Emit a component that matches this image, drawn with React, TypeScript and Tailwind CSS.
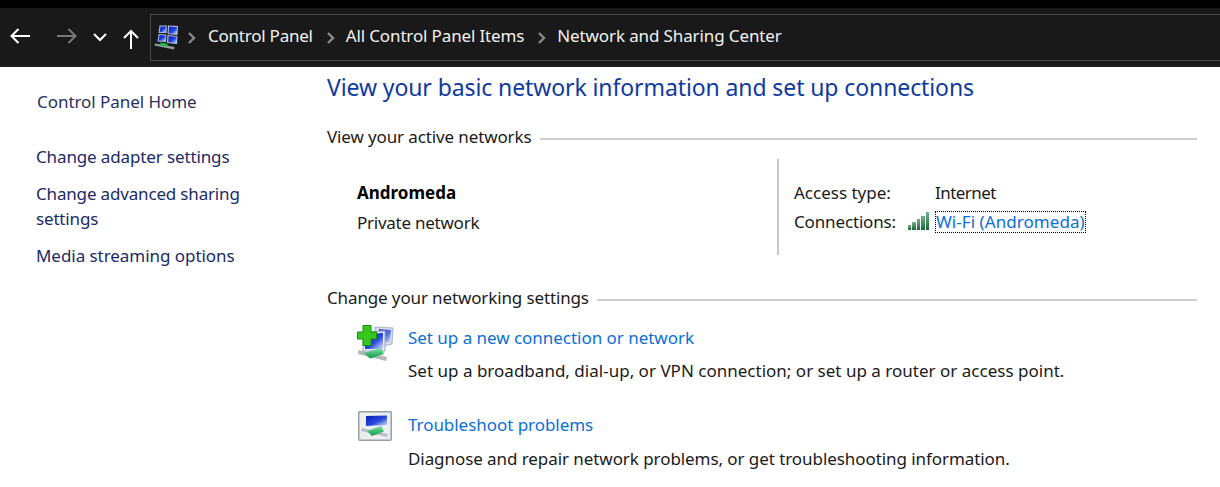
const font = "font-['Noto_Sans','Open_Sans',sans-serif]";

function PcIcon() {
  return (
    <svg width="25" height="25" viewBox="0 0 25 25" className="block">
      <defs>
        <linearGradient id="pcPane" x1="0" y1="0" x2="1" y2="1">
          <stop offset="0" stopColor="#0c22c4" />
          <stop offset="0.55" stopColor="#1c40de" />
          <stop offset="1" stopColor="#d6e2fa" />
        </linearGradient>
      </defs>
      <path d="M5.5 0.5 L13 0.5 L12.5 8 L4.5 8 Z" fill="#a8b8e0" />
      <path d="M14 0.5 L24 1 L23.5 10 L13.5 9 Z" fill="#b8c4e4" />
      <path d="M4.5 9 L12.5 9.5 L12 17 L3.5 16.5 Z" fill="#a8b8e0" />
      <path d="M13.5 10 L23.5 11 L23 19 L13 18 Z" fill="#b8c4e4" />
      <path d="M6.5 1.5 L12 1.5 L11.6 7 L5.6 7 Z" fill="url(#pcPane)" />
      <path d="M15 1.5 L23 2 L22.6 9 L14.6 8.2 Z" fill="url(#pcPane)" />
      <path d="M5.5 10 L11.6 10.4 L11.2 16 L4.6 15.6 Z" fill="url(#pcPane)" />
      <path d="M14.6 11 L22.6 11.8 L22.2 18 L14.2 17.2 Z" fill="url(#pcPane)" />
      <path d="M1 18.5 L20.5 22 L20 24.5 L0.5 20.5 Z" fill="#9aa0a0" />
      <path d="M6 17.5 L13 18.5 L14 21.5 L7 20.5 Z" fill="#10c040" />
    </svg>
  );
}

function BackArrow({ color }: { color: string }) {
  return (
    <svg width="20" height="16" viewBox="0 0 20 16" fill="none" stroke={color} strokeWidth="2">
      <path d="M20 8 H1.5 M8.5 1 L1.5 8 L8.5 15" />
    </svg>
  );
}

function Crumb() {
  return (
    <svg width="8" height="12" viewBox="0 0 8 12" fill="none" stroke="#8a8a8a" strokeWidth="2.4">
      <path d="M1 1 L6 6 L1 11" />
    </svg>
  );
}

function SectionHead({ children, tracking }: { children: React.ReactNode; tracking: string }) {
  return (
    <div className="flex items-center gap-2 pr-[23px]">
      <span className={`whitespace-nowrap text-[#1a1a1a] ${tracking}`}>{children}</span>
      <div className="mt-[4px] h-[2px] flex-1 bg-[#cfcfcf]" />
    </div>
  );
}

function SignalBars() {
  const bars = [5, 8, 11, 14, 18];
  return (
    <div className="flex h-[18px] -translate-y-[2px] items-end gap-px">
      {bars.map((h) => (
        <div key={h} className="w-[3.4px] bg-gradient-to-b from-[#6fb587] to-[#17683a]" style={{ height: h }} />
      ))}
    </div>
  );
}

function NewConnIcon() {
  return (
    <svg width="38" height="38" viewBox="0 0 38 38" className="block">
      <defs>
        <linearGradient id="scr" x1="0" y1="0" x2="1" y2="1">
          <stop offset="0" stopColor="#0a1fb8" />
          <stop offset="0.55" stopColor="#2648dc" />
          <stop offset="1" stopColor="#dce6fa" />
        </linearGradient>
        <linearGradient id="tube" x1="0" y1="0" x2="0" y2="1">
          <stop offset="0" stopColor="#7ce0a0" />
          <stop offset="1" stopColor="#0d9a48" />
        </linearGradient>
      </defs>
      <path d="M18 3 L36 4 L35 20 L25 22 L18 20 Z" fill="#d4dcf0" stroke="#a8b4cc" />
      <path d="M22 5 L34 6 L33 18 L22 18 Z" fill="url(#scr)" opacity="0.75" />
      <path d="M6 8 L28 7 L28 27 L6 27 Z" fill="#e6eaf4" stroke="#9aa4bc" />
      <path d="M8 10 L26 9 L26 25 L8 25 Z" fill="url(#scr)" />
      <path d="M0.5 8 H6 V1.5 H14 V8 H19.5 V15 H14 V21.5 H6 V15 H0.5 Z" fill="#36c81c" stroke="#1c8a10" />
      <path d="M1.5 26 L30 33 L29 37 L1 30 Z" fill="#b4b8bc" />
      <path d="M7 29 L24 24 L27 30 L13 34.5 Z" fill="url(#tube)" />
    </svg>
  );
}

function TroubleIcon() {
  return (
    <svg width="34" height="30" viewBox="0 0 34 30" className="block">
      <defs>
        <linearGradient id="scr2" x1="0" y1="0" x2="1" y2="1">
          <stop offset="0" stopColor="#0a1fb8" />
          <stop offset="0.55" stopColor="#2648dc" />
          <stop offset="1" stopColor="#dce6fa" />
        </linearGradient>
        <linearGradient id="tube2" x1="0" y1="0" x2="0" y2="1">
          <stop offset="0" stopColor="#7ce0a0" />
          <stop offset="1" stopColor="#0d9a48" />
        </linearGradient>
      </defs>
      <rect x="0.75" y="0.75" width="32.5" height="28.5" rx="1" fill="#eceef0" stroke="#9ca0a4" strokeWidth="1.5" />
      <path d="M8 5 L29 4.5 L29 14 L8 15 Z" fill="url(#scr2)" />
      <path d="M4 17 L30 23 L29 26 L3 20 Z" fill="#babec2" />
      <path d="M9 20 L23 15 L26 20.5 L14 25 Z" fill="url(#tube2)" />
    </svg>
  );
}

export default function App() {
  return (
    <div className={`h-[487px] w-[1220px] overflow-hidden bg-white text-[17px] leading-[26px] text-black ${font}`}>
      <div className="h-[8px] bg-black" />
      <div className="flex h-[59px] items-center bg-[#191919] pl-[10px]">
        <div className="-translate-y-[2px]"><BackArrow color="#ffffff" /></div>
        <div className="ml-[27px] -translate-y-[2px] rotate-180">
          <BackArrow color="#7a7a7a" />
        </div>
        <svg className="ml-[16px]" width="14" height="9" viewBox="0 0 14 9" fill="none" stroke="#fff" strokeWidth="2">
          <path d="M1 1 L7 7 L13 1" />
        </svg>
        <svg className="ml-[16px] translate-y-px" width="16" height="20" viewBox="0 0 16 20" fill="none" stroke="#fff" strokeWidth="2">
          <path d="M8 20 V2 M1 9 L8 2 L15 9" />
        </svg>
        <div className="ml-[11px] flex h-[47px] flex-1 items-center border border-r-0 border-[#4d4d4d] pl-[3px] text-[#f2f2f2]">
          <PcIcon />
          <div className="ml-[9px]"><Crumb /></div>
          <span className="ml-[12px] -translate-y-[2px] tracking-[-0.23px]">Control Panel</span>
          <div className="ml-[14px]"><Crumb /></div>
          <span className="ml-[11px] -translate-y-[2px] tracking-[-0.14px]">All Control Panel Items</span>
          <div className="ml-[14px]"><Crumb /></div>
          <span className="ml-[11px] -translate-y-[2px] tracking-[-0.12px]">Network and Sharing Center</span>
        </div>
      </div>
      <div className="flex">
        <div className="w-[327px] shrink-0 pl-[36px] pt-[22px] text-[#1b2a66]">
          <div className="pl-px tracking-[-0.05px] text-[#28305f]">Control Panel Home</div>
          <div className="mt-[29px] tracking-[-0.13px]">Change adapter settings</div>
          <div className="mt-[11px] w-[230px] leading-[25px] tracking-[-0.17px]">Change advanced sharing settings</div>
          <div className="mt-[12px] tracking-[-0.05px]">Media streaming options</div>
        </div>
        <div className="flex-1">
          <div className="pt-[4px] text-[23px] leading-[32px] tracking-[-0.1px] text-[#0f3a9e]">View your basic network information and set up connections</div>
          <div className="mt-[21px]"><SectionHead tracking="tracking-[-0.12px]">View your active networks</SectionHead></div>
          <div className="mt-[9px] flex h-[96px]">
            <div className="w-[450px] pl-[30px] pt-[19px] leading-[30px]">
              <div className="font-bold">Andromeda</div>
              <div className="tracking-[-0.25px] text-[#1a1a1a]">Private network</div>
            </div>
            <div className="w-[2px] bg-[#c8c8c8]" />
            <div className="pl-[15px] pt-[19px] leading-[30px] text-[#1a1a1a]">
              <div className="flex">
                <span className="w-[141px]">Access type:</span>
                <span className="tracking-[-0.55px]">Internet</span>
              </div>
              <div className="flex items-center">
                <span className="w-[114px] -translate-y-px tracking-[-0.15px]">Connections:</span>
                <SignalBars />
                <a className="ml-[6px] -translate-y-px border border-dotted border-black leading-[20px] tracking-[0.06px] text-[#0a6fd8]">Wi-Fi (Andromeda)</a>
              </div>
            </div>
          </div>
          <div className="mt-[30px]"><SectionHead tracking="tracking-[-0.13px]">Change your networking settings</SectionHead></div>
          <div className="mt-[11px] flex gap-[13px] pl-[30px]">
            <div className="w-[38px] shrink-0 pt-[2px]"><NewConnIcon /></div>
            <div>
              <div className="leading-[32px] tracking-[-0.03px] text-[#0a6fd8]">Set up a new connection or network</div>
              <div className="leading-[34px] tracking-[0.01px] text-[#1a1a1a]">Set up a broadband, dial-up, or VPN connection; or set up a router or access point.</div>
            </div>
          </div>
          <div className="mt-[21px] flex gap-[17px] pl-[31px]">
            <div className="w-[33px] shrink-0 pt-[2px]"><TroubleIcon /></div>
            <div>
              <div className="leading-[32px] tracking-[-0.05px] text-[#0a6fd8]">Troubleshoot problems</div>
              <div className="mt-px leading-[34px] tracking-[-0.07px] text-[#1a1a1a]">Diagnose and repair network problems, or get troubleshooting information.</div>
            </div>
          </div>
        </div>
      </div>
    </div>
  );
}
